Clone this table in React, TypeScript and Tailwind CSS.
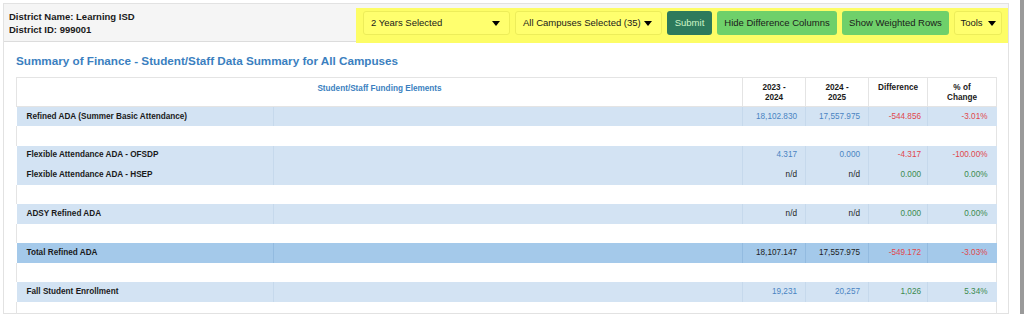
import React from 'react';

type Row = {
  label?: string;
  a?: string;
  b?: string;
  diff?: string;
  pct?: string;
  tone?: 'blue' | 'black';
  sign?: 'neg' | 'pos';
  total?: boolean;
};

const rows: Row[] = [
  { label: 'Refined ADA (Summer Basic Attendance)', a: '18,102.830', b: '17,557.975', diff: '-544.856', pct: '-3.01%', tone: 'blue', sign: 'neg' },
  {},
  { label: 'Flexible Attendance ADA - OFSDP', a: '4.317', b: '0.000', diff: '-4.317', pct: '-100.00%', tone: 'blue', sign: 'neg' },
  { label: 'Flexible Attendance ADA - HSEP', a: 'n/d', b: 'n/d', diff: '0.000', pct: '0.00%', tone: 'black', sign: 'pos' },
  {},
  { label: 'ADSY Refined ADA', a: 'n/d', b: 'n/d', diff: '0.000', pct: '0.00%', tone: 'black', sign: 'pos' },
  {},
  { label: 'Total Refined ADA', a: '18,107.147', b: '17,557.975', diff: '-549.172', pct: '-3.03%', tone: 'black', sign: 'neg', total: true },
  {},
  { label: 'Fall Student Enrollment', a: '19,231', b: '20,257', diff: '1,026', pct: '5.34%', tone: 'blue', sign: 'pos' },
  {},
];

const Caret = () => (
  <span className="inline-block w-0 h-0 border-l-[4px] border-r-[4px] border-t-[5px] border-l-transparent border-r-transparent border-t-black" />
);

const App = () => {
  return (
    <div className="flex w-[1024px] h-[314px] overflow-hidden bg-white font-['Liberation_Sans',Arial,sans-serif] text-[#1a1a1a]">
      <div className="ml-[3px] mt-[3px] w-[1006px] border border-[#e2e2e2] flex flex-col">
        {/* header */}
        <div className="flex justify-between h-[38px] bg-[#f5f5f5] border-b border-[#dcdcdc]">
          <div className="pl-[5px] pt-[6px] text-[9.5px] font-bold leading-[13px] flex flex-col">
            <span>District Name: Learning ISD</span>
            <span>District ID: 999001</span>
          </div>
          <div className="mt-[4px] h-[35px] w-[652px] bg-[#fdfd66] flex items-start gap-[5px] pl-[7px] pt-[3px] text-[9.5px] whitespace-nowrap">
            <button className="h-[24px] w-[147px] flex items-center justify-between pl-[7px] pr-[9px] bg-[#ffff6e] border border-[#eded5a] rounded-[3px]">
              <span>2 Years Selected</span>
              <Caret />
            </button>
            <button className="h-[24px] w-[147px] flex items-center justify-between pl-[7px] pr-[9px] bg-[#ffff6e] border border-[#eded5a] rounded-[3px]">
              <span>All Campuses Selected (35)</span>
              <Caret />
            </button>
            <button className="h-[24px] w-[45px] bg-[#2d7a5c] text-[#cdf5c6] rounded-[3px]">Submit</button>
            <button className="h-[24px] w-[120px] bg-[#6fd06a] rounded-[3px]">Hide Difference Columns</button>
            <button className="h-[24px] w-[107px] bg-[#6fd06a] rounded-[3px]">Show Weighted Rows</button>
            <button className="h-[24px] w-[48px] flex items-center justify-center gap-[5px] bg-[#ffff6e] border border-[#eded5a] rounded-[3px]">
              <span>Tools</span>
              <Caret />
            </button>
          </div>
        </div>

        {/* body */}
        <div className="px-[12px]">
          <h2 className="mt-[12px] h-[23px] text-[11.7px] font-bold text-[#3b7fc0] leading-[14px]">
            Summary of Finance - Student/Staff Data Summary for All Campuses
          </h2>
          <table className="w-[980px] border-collapse table-fixed text-[8.2px] leading-[10px]">
            <colgroup>
              <col className="w-[257px]" />
              <col className="w-[469px]" />
              <col className="w-[63px]" />
              <col className="w-[63px]" />
              <col className="w-[59px]" />
              <col className="w-[69px]" />
            </colgroup>
            <thead>
              <tr className="h-[29px] font-bold">
                <th colSpan={2} className="align-top pt-[6px] text-[#3b7fc0] border border-[#e4e4e4]">
                  Student/Staff Funding Elements
                </th>
                <th className="align-top pt-[5px] border border-[#e4e4e4]">2023 -<br />2024</th>
                <th className="align-top pt-[5px] border border-[#e4e4e4]">2024 -<br />2025</th>
                <th className="align-top pt-[5px] border border-[#e4e4e4]">Difference</th>
                <th className="align-top pt-[5px] border border-[#e4e4e4]">% of<br />Change</th>
              </tr>
            </thead>
            <tbody>
              {rows.map((r, i) => {
                if (!r.label) {
                  return (
                    <tr key={i} className="h-[19.5px]">
                      <td colSpan={6} className="border-x border-[#e4e4e4]" />
                    </tr>
                  );
                }
                const bg = r.total ? 'bg-[#a4c9ea]' : 'bg-[#d3e3f3]';
                const line = r.total ? 'border-[#93bbe0]' : 'border-[#c6d9ec]';
                const valColor = r.tone === 'blue' ? 'text-[#4a84c2]' : 'text-[#222]';
                const signColor = r.sign === 'neg' ? 'text-[#e0484d]' : 'text-[#3b8a4f]';
                return (
                  <tr key={i} className={`h-[19.5px] ${bg}`}>
                    <td className={`pl-[10px] font-bold border-r ${line}`}>{r.label}</td>
                    <td className={`border-r ${line}`} />
                    <td className={`text-right pr-[8px] border-r ${line} ${valColor}`}>{r.a}</td>
                    <td className={`text-right pr-[8px] border-r ${line} ${valColor}`}>{r.b}</td>
                    <td className={`text-right pr-[6px] border-r ${line} ${signColor}`}>{r.diff}</td>
                    <td className={`text-right pr-[9px] ${signColor}`}>{r.pct}</td>
                  </tr>
                );
              })}
            </tbody>
          </table>
        </div>
      </div>
      <div className="flex-1 flex justify-end">
        <div className="w-[4px] bg-[#9a9a9a]" />
      </div>
    </div>
  );
};

export default App;
